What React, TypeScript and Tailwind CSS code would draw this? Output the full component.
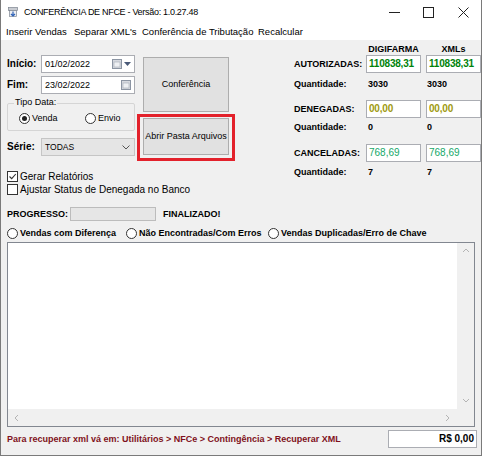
import React from "react";

const Radio = ({ checked = false }: { checked?: boolean }) => (
    <span className="inline-flex h-[11px] w-[11px] shrink-0 items-center justify-center rounded-full border border-[#333] bg-white">
        {checked && <span className="h-[5px] w-[5px] rounded-full bg-[#222]"></span>}
    </span>
);

const Check = ({ checked = false }: { checked?: boolean }) => (
    <span className="inline-flex h-[11px] w-[11px] shrink-0 items-center justify-center border border-[#333] bg-white">
        {checked && (
            <svg width="9" height="9" viewBox="0 0 9 9">
                <path d="M1.5 4.5 L3.7 6.7 L7.8 2" fill="none" stroke="#333" strokeWidth="1.1" />
            </svg>
        )}
    </span>
);

const CalendarIcon = () => (
    <svg width="10" height="10" viewBox="0 0 10 10">
        <rect x="0.5" y="0.5" width="9" height="9" fill="#d6d9df" stroke="#8c95a3" />
        <rect x="2" y="3" width="6" height="5" fill="#eef0f3" stroke="#a3aab5" strokeWidth="0.6" />
    </svg>
);

const DateField = ({ value, dropdown = false }: { value: string; dropdown?: boolean }) => (
    <div className="flex h-[18px] w-[94px] items-center border border-[#abadb3] bg-white pl-[3px] pr-[3px]">
        <span className="flex-1 text-[9px] text-black">{value}</span>
        <CalendarIcon />
        {dropdown && (
            <svg width="7" height="4" viewBox="0 0 7 4" className="ml-[2px]">
                <path d="M0 0 L7 0 L3.5 4 Z" fill="#4a5a78" />
            </svg>
        )}
    </div>
);

const ValueBox = ({ value, color, bold = true }: { value: string; color: string; bold?: boolean }) => (
    <div className="flex h-[18px] w-[55px] items-center border border-[#abadb3] bg-white px-[2px]">
        <span className={bold ? "text-[10px] font-bold tracking-[-0.2px]" : "text-[10px] font-normal"} style={{ color }}>
            {value}
        </span>
    </div>
);

const Chevron = ({ dir }: { dir: "up" | "down" | "left" | "right" }) => {
    const paths: Record<string, string> = {
        up: "M1 5 L4 2 L7 5",
        down: "M1 2 L4 5 L7 2",
        left: "M5 1 L2 4 L5 7",
        right: "M2 1 L5 4 L2 7",
    };
    return (
        <svg width="8" height="8" viewBox="0 0 8 8">
            <path d={paths[dir]} fill="none" stroke="#b4b4b4" strokeWidth="1" />
        </svg>
    );
};

export default function App() {
    return (
        <div className="flex h-[456px] w-[482px] flex-col overflow-hidden border-x border-b border-[#7a7a7a] bg-[#f0f0f0] font-['Liberation_Sans',Arial,sans-serif] text-[9px] leading-none text-black">
            {/* title bar */}
            <div className="flex h-[24px] shrink-0 items-center bg-white text-[9px] tracking-[-0.3px]">
                <svg width="10" height="11" viewBox="0 0 10 11" className="ml-[7px]">
                    <rect x="0.5" y="0.5" width="9" height="3" fill="#c9ccd2" stroke="#7d8590" strokeWidth="0.7" />
                    <rect x="1.5" y="3.5" width="7" height="6" fill="#eceef1" stroke="#7d8590" strokeWidth="0.7" />
                    <path d="M5 4.5 L5 9 M3 7 L5 9 L7 7" fill="none" stroke="#2f63b8" strokeWidth="1.2" />
                </svg>
                <span className="ml-[6px]">CONFERÊNCIA DE NFCE - Versão: 1.0.27.48</span>
                <div className="ml-auto flex h-full items-center">
                    <div className="flex h-full w-[34px] items-center justify-center">
                        <svg width="11" height="11" viewBox="0 0 11 11"><path d="M0 5.5 L11 5.5" stroke="#222" strokeWidth="1" /></svg>
                    </div>
                    <div className="flex h-full w-[34px] items-center justify-center">
                        <svg width="11" height="11" viewBox="0 0 11 11"><rect x="0.5" y="0.5" width="10" height="10" fill="none" stroke="#222" strokeWidth="1" /></svg>
                    </div>
                    <div className="flex h-full w-[36px] items-center justify-center">
                        <svg width="11" height="11" viewBox="0 0 11 11"><path d="M0.5 0.5 L10.5 10.5 M10.5 0.5 L0.5 10.5" stroke="#222" strokeWidth="1" /></svg>
                    </div>
                </div>
            </div>

            {/* menu */}
            <div className="flex h-[16px] shrink-0 items-center bg-white pl-[5px] text-[9.5px]">
                <span className="w-[68px]">Inserir Vendas</span>
                <span className="w-[68px]">Separar XML's</span>
                <span className="w-[116px]">Conferência de Tributação</span>
                <span>Recalcular</span>
            </div>

            {/* top area */}
            <div className="flex h-[156px] shrink-0">
                <div className="flex flex-col pl-[6px] pt-[15px]">
                    <div className="flex">
                        <div className="flex flex-col">
                            <div className="flex h-[18px] items-center">
                                <span className="w-[34px] text-[10px] font-bold">Início:</span>
                                <DateField value="01/02/2022" dropdown />
                            </div>
                            <div className="mt-[3px] flex h-[18px] items-center">
                                <span className="w-[34px] text-[10px] font-bold">Fim:</span>
                                <DateField value="23/02/2022" />
                            </div>
                            <div className="relative mt-[9px] flex h-[28px] w-[128px] items-center rounded-[2px] border border-[#d5d5d5] pl-[11px] pt-[3px]">
                                <span className="absolute -top-[6px] left-[6px] bg-[#f0f0f0] px-[1px]">Tipo Data:</span>
                                <div className="flex w-[66px] items-center gap-[2px]">
                                    <Radio checked />
                                    <span>Venda</span>
                                </div>
                                <div className="flex items-center gap-[2px]">
                                    <Radio />
                                    <span>Envio</span>
                                </div>
                            </div>
                            <div className="mt-[7px] flex h-[18px] items-center">
                                <span className="w-[34px] text-[10px] font-bold">Série:</span>
                                <div className="flex h-[18px] w-[94px] items-center border border-[#c5c5c5] bg-[#e5e5e5] pl-[3px] pr-[4px]">
                                    <span className="flex-1 text-[8.5px]">TODAS</span>
                                    <svg width="8" height="5" viewBox="0 0 8 5">
                                        <path d="M0.5 0.5 L4 4 L7.5 0.5" fill="none" stroke="#555" strokeWidth="1" />
                                    </svg>
                                </div>
                            </div>
                        </div>
                        <div className="ml-[2px] flex flex-col pt-[2px]">
                            <button className="ml-[6px] h-[55px] w-[86px] border border-[#adadad] bg-[#e1e1e1] text-[9px]">
                                Conferência
                            </button>
                            <div className="mt-[2px] h-[47px] w-[98px] border-[3px] border-[#e3212b] pl-[3px] pt-[1px]">
                                <button className="h-[37px] w-[86px] border border-[#adadad] bg-[#e1e1e1] text-[9px]">
                                    Abrir Pasta Arquivos
                                </button>
                            </div>
                        </div>
                    </div>
                    <div className="mt-[9px] flex h-[13px] items-center gap-[2px] text-[10px]">
                        <Check checked />
                        <span>Gerar Relatórios</span>
                    </div>
                    <div className="flex h-[13px] items-center gap-[2px] text-[10px]">
                        <Check />
                        <span>Ajustar Status de Denegada no Banco</span>
                    </div>
                </div>

                <div className="ml-auto grid w-[187px] grid-cols-[67px_55px_55px] content-start gap-x-[5px] font-bold">
                    <span></span>
                    <span className="flex h-[14px] items-end justify-center">DIGIFARMA</span>
                    <span className="flex h-[14px] items-end justify-center">XMLs</span>

                    <span className="mt-[1px] flex h-[18px] items-center">AUTORIZADAS:</span>
                    <div className="mt-[1px]"><ValueBox value="110838,31" color="#00820a" /></div>
                    <div className="mt-[1px]"><ValueBox value="110838,31" color="#00820a" /></div>

                    <span className="mt-[3px] flex h-[16px] items-center">Quantidade:</span>
                    <span className="mt-[3px] flex h-[16px] items-center pl-[2px]">3030</span>
                    <span className="mt-[3px] flex h-[16px] items-center pl-[1px]">3030</span>

                    <span className="mt-[8px] flex h-[18px] items-center">DENEGADAS:</span>
                    <div className="mt-[8px]"><ValueBox value="00,00" color="#a09a10" /></div>
                    <div className="mt-[8px]"><ValueBox value="00,00" color="#a09a10" /></div>

                    <span className="mt-[1px] flex h-[16px] items-center">Quantidade:</span>
                    <span className="mt-[1px] flex h-[16px] items-center pl-[2px]">0</span>
                    <span className="mt-[1px] flex h-[16px] items-center pl-[1px]">0</span>

                    <span className="mt-[9px] flex h-[18px] items-center">CANCELADAS:</span>
                    <div className="mt-[9px]"><ValueBox value="768,69" color="#14a868" bold={false} /></div>
                    <div className="mt-[9px]"><ValueBox value="768,69" color="#14a868" bold={false} /></div>

                    <span className="mt-[2px] flex h-[16px] items-center">Quantidade:</span>
                    <span className="mt-[2px] flex h-[16px] items-center pl-[2px]">7</span>
                    <span className="mt-[2px] flex h-[16px] items-center pl-[1px]">7</span>
                </div>
            </div>

            {/* progress */}
            <div className="mt-[11px] flex h-[14px] shrink-0 items-center pl-[6px] font-bold">
                <span className="w-[63px]">PROGRESSO:</span>
                <div className="h-[14px] w-[86px] border border-[#bcbcbc] bg-[#e6e6e6]"></div>
                <span className="ml-[7px]">FINALIZADO!</span>
            </div>

            {/* filters */}
            <div className="mt-[5px] flex h-[14px] shrink-0 items-center pl-[6px] font-bold">
                <div className="flex w-[119px] items-center gap-[2px]">
                    <Radio />
                    <span>Vendas com Diferença</span>
                </div>
                <div className="flex w-[142px] items-center gap-[2px]">
                    <Radio />
                    <span>Não Encontradas/Com Erros</span>
                </div>
                <div className="flex items-center gap-[2px]">
                    <Radio />
                    <span>Vendas Duplicadas/Erro de Chave</span>
                </div>
            </div>

            {/* memo */}
            <div className="ml-[6px] mt-[2px] flex h-[185px] w-[468px] shrink-0 flex-col border border-[#828790] bg-white">
                <div className="flex flex-1">
                    <div className="flex-1"></div>
                    <div className="flex w-[17px] flex-col items-center justify-between bg-[#f0f0f0] py-[4px]">
                        <Chevron dir="up" />
                        <Chevron dir="down" />
                    </div>
                </div>
                <div className="flex h-[17px]">
                    <div className="flex flex-1 items-center justify-between bg-[#f0f0f0] px-[5px]">
                        <Chevron dir="left" />
                        <Chevron dir="right" />
                    </div>
                    <div className="w-[17px] bg-[#f0f0f0]"></div>
                </div>
            </div>

            {/* footer */}
            <div className="mt-[3px] flex h-[18px] shrink-0 items-center pl-[6px] pr-[4px]">
                <span className="text-[9px] font-bold text-[#7f1020]">
                    Para recuperar xml vá em: Utilitários &gt; NFCe &gt; Contingência &gt; Recuperar XML
                </span>
                <div className="ml-auto flex h-[18px] w-[89px] items-center justify-end border border-[#abadb3] bg-white pr-[2px] text-[10px] font-bold">
                    R$ 0,00
                </div>
            </div>
        </div>
    );
}
